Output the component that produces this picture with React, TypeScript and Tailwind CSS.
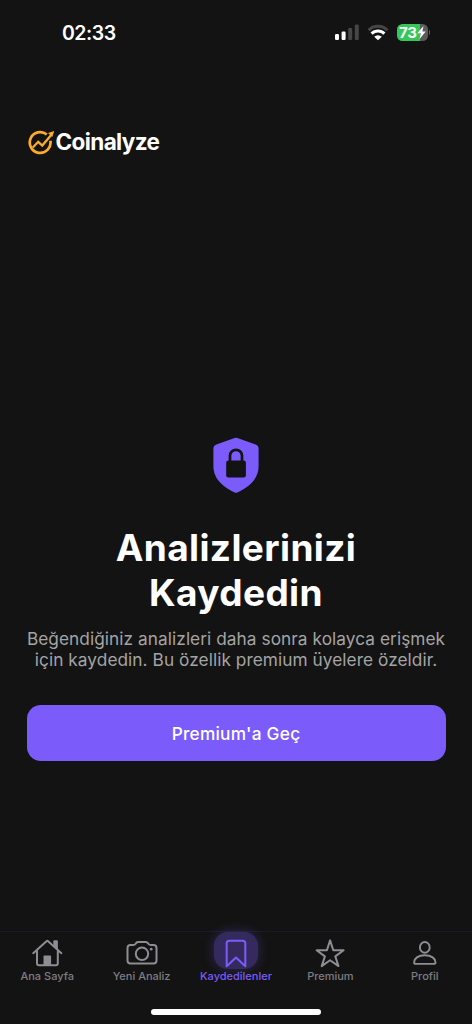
import type { ReactNode } from 'react';
import { clsx } from 'clsx';

interface Tab {
  label: string;
  icon: ReactNode;
}

const tabs: Tab[] = [
  {
    label: 'Ana Sayfa',
    icon: (
      <svg className="h-8 w-8" viewBox="0 0 32 32" fill="none" stroke="currentColor" strokeWidth="2" strokeLinecap="round" strokeLinejoin="round">
        <path d="M2.2 16.2 15.5 4.2a1.1 1.1 0 0 1 1.6 0l13.3 12" />
        <path d="M6 14v12.2c0 1.3.7 2 2 2h16.8c1.3 0 2-.7 2-2V14" />
        <path d="M23.3 9V4.3h2.6v7.3" fill="currentColor" />
        <path d="M12.5 28v-8.5c0-.6.4-1 1-1h5.6c.6 0 1 .4 1 1V28z" fill="currentColor" stroke="none" />
      </svg>
    ),
  },
  {
    label: 'Yeni Analiz',
    icon: (
      <svg className="h-8 w-8" viewBox="0 0 32 32" fill="none" stroke="currentColor" strokeWidth="2" strokeLinecap="round" strokeLinejoin="round">
        <path d="M4.5 8h2.8c1 0 1.6-.3 2.1-1l.7-.9c.6-.8 1.1-1.1 2.1-1.1h7.6c1 0 1.5.3 2.1 1.1l.7.9c.5.7 1.1 1 2.1 1h2.8c2 0 3 1 3 3v12.500c0 2-1 3-3 3h-23c-2 0-3-1-3-3V11c0-2 1-3 3-3z" />
        <circle cx="16" cy="16.800" r="6.200" />
        <circle cx="25.2" cy="12.2" r="1.4" fill="currentColor" stroke="none" />
      </svg>
    ),
  },
  {
    label: 'Kaydedilenler',
    icon: (
      <svg className="h-8 w-8" viewBox="0 0 32 32" fill="none" stroke="currentColor" strokeWidth="2" strokeLinejoin="round">
        <path d="M6.7 29.3V6.2c0-1.7.9-2.5 2.5-2.5h13.6c1.6 0 2.5.8 2.5 2.5v23.1L16 20.5z" />
      </svg>
    ),
  },
  {
    label: 'Premium',
    icon: (
      <svg className="h-8 w-8" viewBox="0 0 32 32" fill="none" stroke="currentColor" strokeWidth="2" strokeLinejoin="round">
        <path d="m16.1 3.4 3.2 9.9h10.3l-8.3 6.1 3.2 9.7-8.4-5.9-8.4 5.9 3.2-9.7-8.3-6.1h10.3z" />
      </svg>
    ),
  },
  {
    label: 'Profil',
    icon: (
      <svg className="h-8 w-8" viewBox="0 0 32 32" fill="none" stroke="currentColor" strokeWidth="1.9" strokeLinejoin="round">
        <ellipse cx="15.800" cy="10.400" rx="4.9" ry="5.4" />
        <path d="M5.100 25.2c0-3.5 4-7 10.700-7s10.700 3.500 10.700 7c0 1.100-.6 1.700-1.700 1.700h-18c-1.100 0-1.700-.6-1.700-1.700z" />
      </svg>
    ),
  },
];

const activeTab = 'Kaydedilenler';

function StatusBar() {
  return (
    <div className="flex h-[65px] items-center justify-between pr-[42px] pl-[62px]">
      <span className="text-[19.5px] leading-6 font-semibold tracking-[-0.5px]">02:33</span>
      <div className="flex items-center gap-2">
        <svg className="h-[17px] w-6" viewBox="0 0 24 17">
          <rect x="0" y="10" width="4" height="6" rx="1.2" fill="#fff" />
          <rect x="6.6" y="7.5" width="4" height="8.5" rx="1.2" fill="#fff" />
          <rect x="13.2" y="4" width="4" height="12" rx="1.2" fill="#464646" />
          <rect x="19.8" y="0.5" width="4" height="15.5" rx="1.2" fill="#464646" />
        </svg>
        <svg className="h-[17px] w-[22px]" viewBox="0 0 22 17" fill="none" strokeWidth="3">
          <path d="M1.6 6.2a13.3 13.3 0 0 1 18.8 0" stroke="#464646" />
          <path d="M4.6 9.6a9 9 0 0 1 12.8 0" stroke="#fff" />
          <path d="M7.2 12.7a5.4 5.4 0 0 1 7.6 0L11 16.3z" fill="#fff" />
        </svg>
        <div className="flex items-center gap-px">
          <div className="flex h-[17px] w-[31px] items-center rounded-[5.5px] bg-linear-to-r from-[#34c759] from-73% to-[#5b5b5b] to-73% pl-[2.5px]">
            <span className="text-[15px] leading-none font-bold tracking-[-0.2px]">73</span>
            <svg className="h-[13px] w-[9px]" viewBox="0 0 8 12" fill="#fff">
              <path d="M5.8 0 .1 6.8h3.200L2.2 12l5.700-7H4.800z" />
            </svg>
          </div>
          <div className="h-[5px] w-[1.5px] rounded-r-full bg-[#5b5b5b]" />
        </div>
      </div>
    </div>
  );
}

function Logo() {
  return (
    <div className="flex items-center">
      <svg className="mt-px h-[26px] w-[27.5px]" viewBox="0 0 27.5 26" fill="none" stroke="#fbad26" strokeWidth="2.7">
        <path d="M18.8 4.5A10.400 10.400 0 1 0 22.400 10.700" />
        <path d="m4.8 17.5 5.4-5.7 4.1 3.8L23.4 4.8" strokeWidth="2.3" />
        <path d="m26.2 1-6.200 1.900 4.300 4z" fill="#fbad26" stroke="none" />
      </svg>
      <span className="text-[22.5px] leading-7 font-bold tracking-[-0.6px]">Coinalyze</span>
    </div>
  );
}

function ShieldLock() {
  return (
    <svg className="h-14 w-12" viewBox="0 0 48 56">
      <path
        d="M22.6 1.1a4 4 0 0 1 2.8 0l18.2 6.4c1.9.7 3 2.1 3 4v17.8c0 9.2-5.1 16.5-14 22.2-2.6 1.7-5 3-7.2 4a3.3 3.3 0 0 1-2.8 0c-2.2-1-4.6-2.3-7.2-4-8.9-5.7-14-13-14-22.2V11.5c0-1.9 1.1-3.3 3-4z"
        fill="#7b5cfa"
      />
      <rect x="14.2" y="23.5" width="19.7" height="17" rx="2.3" fill="#131313" />
      <path d="M18 25v-6.200a6 6 0 0 1 12 0V25" fill="none" stroke="#131313" strokeWidth="2.7" />
    </svg>
  );
}

function TabBar() {
  return (
    <nav className="grid h-[93px] grid-cols-5 border-t border-[#1c1a2a]">
      {tabs.map((tab) => {
        const isActive = tab.label === activeTab;

        return (
          <div
            key={tab.label}
            className={clsx('flex flex-col items-center', isActive ? 'text-[#7b5cfa]' : 'text-[#8e8d93]')}
          >
            <div
              className={clsx(
                'flex h-[37px] w-11 items-center justify-center rounded-[14px] pt-1',
                isActive && 'bg-[#352a5e] shadow-[0_0_12px_rgba(123,92,250,0.3)]'
              )}
            >
              {tab.icon}
            </div>
            <span className={clsx('text-[11px] leading-[14px] font-medium whitespace-nowrap', !isActive && 'text-[#7e7d82]')}>
              {tab.label}
            </span>
          </div>
        );
      })}
    </nav>
  );
}

export default function App() {
  return (
    <div className="relative flex h-[1024px] w-[472px] flex-col bg-[#131313] font-['Inter',sans-serif] text-white">
      <StatusBar />
      <header className="px-7 pt-[63px]">
        <Logo />
      </header>

      <main className="flex flex-1 flex-col items-center px-[26px] pt-[281px]">
        <ShieldLock />
        <h1 className="mt-8 text-center text-[37px] leading-[45px] font-bold tracking-[0.38px]">
          Analizlerinizi
          <br />
          Kaydedin
        </h1>
        <p className="mt-[13px] text-center text-[17.25px] leading-[21px] tracking-[0.06px] whitespace-nowrap text-[#a4a4a4]">
          Beğendiğiniz analizleri daha sonra kolayca erişmek
          <br />
          için kaydedin. Bu özellik premium üyelere özeldir.
        </p>
        <button className="mt-[35px] h-14 w-[419px] rounded-[14px] bg-[#7b5cfa] pt-0.5 text-[17.25px] font-medium tracking-[0.24px]">
          Premium&apos;a Geç
        </button>
      </main>

      <TabBar />
      {/* Home indicator */}
      <div className="absolute bottom-[9px] left-1/2 h-1.5 w-[170px] -translate-x-1/2 rounded-full bg-white" />
    </div>
  );
}
